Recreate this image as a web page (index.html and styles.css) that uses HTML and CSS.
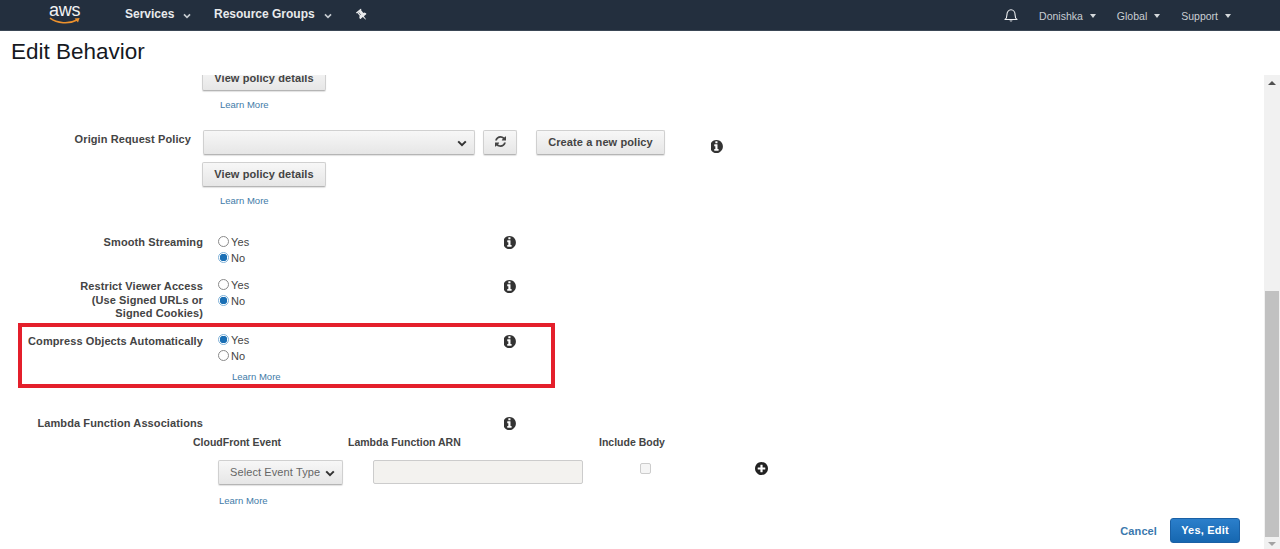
FILE: index.html
```html
<!DOCTYPE html>
<html lang="en">
<head>
<meta charset="utf-8">
<title>Edit Behavior</title>
<link rel="stylesheet" href="styles.css">
</head>
<body>
<svg class="defs" aria-hidden="true">
  <symbol id="i-info" viewBox="128 128 1536 1536"><path d="M1024 1376v-160q0-14-9-23t-23-9h-96v-512q0-14-9-23t-23-9h-320q-14 0-23 9t-9 23v160q0 14 9 23t23 9h96v320h-96q-14 0-23 9t-9 23v160q0 14 9 23t23 9h448q14 0 23-9t9-23zm-128-896v-160q0-14-9-23t-23-9h-192q-14 0-23 9t-9 23v160q0 14 9 23t23 9h192q14 0 23-9t9-23zm640 416q0 209-103 385.5t-279.5 279.5-385.5 103-385.5-103-279.5-279.5-103-385.5 103-385.5 279.5-279.5 385.5-103 385.5 103 279.5 279.5 103 385.5z"/></symbol>
  <symbol id="i-plus" viewBox="128 128 1536 1536"><path d="M1344 960v-128q0-26-19-45t-45-19h-256v-256q0-26-19-45t-45-19h-128q-26 0-45 19t-19 45v256h-256q-26 0-45 19t-19 45v128q0 26 19 45t45 19h256v256q0 26 19 45t45 19h128q26 0 45-19t19-45v-256h256q26 0 45-19t19-45zm320-64q0 209-103 385.5t-279.5 279.5-385.5 103-385.5-103-279.5-279.5-103-385.5 103-385.5 279.5-279.5 385.5-103 385.5 103 279.5 279.5 103 385.5z"/></symbol>
  <symbol id="i-refresh" viewBox="128 128 1536 1536"><path d="M1639 1056q0 5-1 7-64 268-268 434.5t-478 166.5q-146 0-282.5-55t-243.5-157l-129 129q-19 19-45 19t-45-19-19-45v-448q0-26 19-45t45-19h448q26 0 45 19t19 45-19 45l-137 137q71 66 161 102t187 36q134 0 250-65t186-179q11-17 53-117 8-23 30-23h192q13 0 22.5 9.5t9.5 22.5zm25-800v448q0 26-19 45t-45 19h-448q-26 0-45-19t-19-45 19-45l138-138q-148-137-349-137-134 0-250 65t-186 179q-11 17-53 117-8 23-30 23h-199q-13 0-22.5-9.5t-9.5-22.5v-7q65-268 270-434.5t480-166.5q146 0 284 55.5t245 156.5l130-129q19-19 45-19t45 19 19 45z"/></symbol>
  <symbol id="i-chev" viewBox="0 0 10 7"><path d="M1.2 1.4 5 5.2 8.8 1.4" fill="none" stroke="currentColor" stroke-width="2"/></symbol>
</svg>

<header class="topbar">
  <a class="logo">
    <span class="logo-text">aws</span>
    <svg class="logo-smile" viewBox="0 0 32 8"><path d="M1 1.2C8 6.4 20 7.4 28 3" fill="none" stroke="#ec912d" stroke-width="1.6"/><path d="M25.6 1.4 30.6 1 29 5.6Z" fill="#ec912d"/></svg>
  </a>
  <nav class="nav-main">
    <a class="nav-item nav-services">Services <svg class="nav-chev"><use href="#i-chev"/></svg></a>
    <a class="nav-item nav-groups">Resource Groups <svg class="nav-chev"><use href="#i-chev"/></svg></a>
    <svg class="pin" viewBox="0 0 1152 1792"><path d="M480 672v-448q0-14-9-23t-23-9-23 9-9 23v448q0 14 9 23t23 9 23-9 9-23zm672 352q0 26-19 45t-45 19h-429l-51 483q-2 12-10.5 20.5t-20.5 8.5h-1q-27 0-32-27l-76-485h-404q-26 0-45-19t-19-45q0-123 78.5-221.5t177.5-98.5v-512q-52 0-90-38t-38-90 38-90 90-38h640q52 0 90 38t38 90-38 90-90 38v512q99 0 177.5 98.5t78.5 221.5z"/></svg>
  </nav>
  <nav class="nav-user">
    <svg class="bell" viewBox="0 0 14 15"><path d="M1 11.5c1.4-1 1.9-2.4 1.9-4.6C2.900 4 4.600 1.800 7 1.800s4.100 2.200 4.100 5.100c0 2.200.5 3.600 1.900 4.600Z" fill="none" stroke="#eef0f2" stroke-width="1.100" stroke-linejoin="round"/><path d="M5.400 12.400a1.700 1.700 0 0 0 3.200 0Z" fill="#eef0f2"/></svg>
    <a class="user-item user-name">Donishka<i class="caret"></i></a>
    <a class="user-item user-global">Global<i class="caret"></i></a>
    <a class="user-item">Support<i class="caret"></i></a>
  </nav>
</header>

<h1 class="page-title">Edit Behavior</h1>

<main class="pane">
  <div class="content">
    <div class="block block-top">
      <button class="btn btn-details">View policy details</button>
      <a class="learn learn-policy">Learn More</a>
    </div>

    <div class="block block-origin">
      <div class="origin-row">
        <label class="label label-origin">Origin Request Policy</label>
        <div class="select-wrap select-policy">
          <select class="select"><option></option></select>
          <svg class="chev"><use href="#i-chev"/></svg>
        </div>
        <button class="btn btn-refresh"><svg class="refresh"><use href="#i-refresh"/></svg></button>
        <button class="btn btn-create">Create a new policy</button>
        <svg class="info info-origin"><use href="#i-info"/></svg>
      </div>
      <button class="btn btn-details btn-details-2">View policy details</button>
      <a class="learn learn-policy">Learn More</a>
    </div>

    <div class="row row-smooth">
      <div class="label">Smooth Streaming</div>
      <div class="radios">
        <label class="radio"><input type="radio" name="smooth">Yes</label>
        <label class="radio"><input type="radio" name="smooth" checked>No</label>
      </div>
      <svg class="info"><use href="#i-info"/></svg>
    </div>

    <div class="row row-restrict">
      <div class="label">Restrict Viewer Access<br>(Use Signed URLs or<br>Signed Cookies)</div>
      <div class="radios">
        <label class="radio"><input type="radio" name="restrict">Yes</label>
        <label class="radio"><input type="radio" name="restrict" checked>No</label>
      </div>
      <svg class="info"><use href="#i-info"/></svg>
    </div>

    <div class="row row-compress">
      <div class="highlight"></div>
      <div class="label">Compress Objects Automatically</div>
      <div class="radios">
        <label class="radio"><input type="radio" name="compress" checked>Yes</label>
        <label class="radio"><input type="radio" name="compress">No</label>
        <a class="learn learn-compress">Learn More</a>
      </div>
      <svg class="info"><use href="#i-info"/></svg>
    </div>

    <div class="row row-lambda">
      <div class="label">Lambda Function Associations</div>
      <div class="radios"></div>
      <svg class="info"><use href="#i-info"/></svg>
    </div>

    <div class="lambda-head">
      <span class="col-event">CloudFront Event</span>
      <span class="col-arn">Lambda Function ARN</span>
      <span class="col-body">Include Body</span>
    </div>

    <div class="lambda-row">
      <div class="select-wrap select-event">
        <select class="select"><option>Select Event Type</option></select>
        <svg class="chev"><use href="#i-chev"/></svg>
      </div>
      <input class="arn" type="text" disabled>
      <input class="check" type="checkbox" disabled>
      <svg class="plus"><use href="#i-plus"/></svg>
    </div>

    <a class="learn learn-lambda">Learn More</a>

    <div class="actions">
      <a class="cancel">Cancel</a>
      <button class="btn-primary">Yes, Edit</button>
    </div>
  </div>

  <div class="scrollbar">
    <i class="arrow-up"></i>
    <div class="track"><div class="thumb"></div></div>
    <i class="arrow-down"></i>
  </div>
</main>
</body>
</html>
```
FILE: styles.css
```css
* { box-sizing: border-box; }
html, body { margin: 0; padding: 0; height: 549px; overflow: hidden; background: #fff; }
body { font-family: "Liberation Sans", Arial, sans-serif; color: #444; }
.defs { position: absolute; width: 0; height: 0; }

/* top bar */
.topbar { height: 31px; background: #232f3e; border-bottom: 1px solid #3a4655; display: flex; align-items: center; color: #e8eaec; }
.logo { width: 125px; padding-left: 49px; display: block; position: relative; height: 30px; }
.logo-text { display: block; font-family: "Liberation Sans", sans-serif; font-size: 18px; line-height: normal; color: #f2f3f4; letter-spacing: -.2px; }
.logo-smile { position: absolute; left: 49px; top: 17px; width: 32px; height: 8px; }
.nav-main { display: flex; align-items: center; flex: 1; margin-top: -2px; }
.nav-item { font-size: 12px; font-weight: 700; display: flex; align-items: center; }
.nav-services { width: 89px; }
.nav-groups { width: 142px; }
.nav-chev { width: 8px; height: 6px; margin-left: 9px; margin-top: 3px; color: #c6cbd0; }
.pin { width: 9px; height: 13px; fill: #e8eaec; transform: rotate(-40deg); margin-left: 2px; margin-top: 2px; }
.nav-user { display: flex; align-items: center; font-size: 10.500px; padding-right: 49px; color: #c9ced3; }
.bell { width: 14px; height: 15px; margin-right: 21px; }
.user-item { display: flex; align-items: center; margin-top: 1px; }
.user-name { margin-right: 21px; }
.user-global { margin-right: 21px; }
.caret { width: 0; height: 0; margin-left: 7px; border: 3px solid transparent; border-top: 4px solid #d5d9dc; border-bottom: 0; }

.page-title { margin: 0; height: 44px; padding: 8px 0 0 11px; font-size: 22.500px; line-height: 25px; font-weight: 400; color: #16191f; }

/* pane */
.pane { height: 474px; display: flex; overflow: hidden; }
.content { flex: 1; min-width: 0; font-size: 11px; }

.btn { font-family: inherit; font-size: 11px; font-weight: 700; letter-spacing: .1px; color: #444; height: 25px; padding: 0 0 1px; border: 1px solid #d0d0d0; border-bottom-color: #b5b5b5; border-radius: 2px; background: linear-gradient(#f7f7f7, #e6e6e6); box-shadow: 0 1px 1px rgba(0,0,0,.12); }
.btn-details { display: block; width: 124px; margin-left: 202px; }
.learn { display: block; font-size: 9.500px; line-height: 12px; color: #3f7ba8; }
.learn-policy { margin: 8px 0 0 220px; }

.block-top { margin-top: -9px; }
.block-origin { margin-top: 19px; }
.origin-row { display: flex; align-items: flex-start; height: 32px; }
.label { width: 203px; flex: none; text-align: right; font-weight: 700; font-size: 11px; line-height: 13.500px; letter-spacing: .1px; color: #444; }
.label-origin { width: 191px; margin-top: 3px; white-space: nowrap; }
.select-wrap { position: relative; flex: none; }
.select-policy { width: 272px; height: 25px; margin-left: 12px; }
.select { appearance: none; -webkit-appearance: none; display: block; width: 100%; height: 100%; font-family: inherit; font-size: 12px; color: #666; padding: 0 0 2px 11px; border: 1px solid #d0d0d0; border-bottom-color: #b5b5b5; border-radius: 2px; background: linear-gradient(#f7f7f7, #e6e6e6); box-shadow: 0 1px 1px rgba(0,0,0,.12); }
.chev { position: absolute; right: 8px; top: 10px; width: 10px; height: 7px; color: #333; pointer-events: none; }
.btn-refresh { flex: none; width: 34px; margin-left: 8px; display: flex; align-items: center; justify-content: center; }
.refresh { width: 11px; height: 11px; fill: #444; margin-top: -2px; }
.btn-create { flex: none; width: 129px; margin-left: 19px; }
.info { width: 13px; height: 13px; fill: #333; flex: none; }
.info-origin { margin: 10px 0 0 46px; }
.btn-details-2 { margin-left: 202px; }

.row { display: flex; align-items: flex-start; position: relative; }
.radios { width: 301px; flex: none; padding-left: 15px; }
.radio { display: flex; align-items: center; height: 16px; font-size: 11px; letter-spacing: .1px; color: #444; }
.radio input { appearance: none; -webkit-appearance: none; width: 11px; height: 11px; margin: -2px 2px 0 0; border: 1px solid #8a8a8a; border-radius: 50%; background: #fff; flex: none; }
.radio input:checked { border-color: #7fb2d9; background: radial-gradient(circle, #1a6fb5 0 3.500px, #fff 4px); }

.row-smooth { margin-top: 27px; height: 43px; }
.row-restrict { height: 55px; }
.row-compress { height: 82px; }
.row-lambda { height: 22px; }
.row-smooth .label, .row-smooth .info { margin-top: 2px; }
.row-restrict .label, .row-restrict .info,
.row-compress .label, .row-compress .info,
.row-lambda .label, .row-lambda .info { margin-top: 3px; }
.learn-compress { margin: 7px 0 0 14px; }

.highlight { position: absolute; left: 18px; top: -9px; width: 537px; height: 65px; border: 4px solid #e41f2b; pointer-events: none; }

.lambda-head { display: flex; height: 24px; font-weight: 700; font-size: 10.500px; line-height: 13px; color: #444; }
.col-event { margin-left: 193px; width: 155px; }
.col-arn { width: 251px; }

.lambda-row { display: flex; align-items: flex-start; height: 35px; padding-left: 218px; }
.select-event { width: 125px; height: 25px; }
.select-event .select { font-size: 11px; letter-spacing: .1px; padding-left: 11px; }
.arn { width: 210px; height: 24px; margin: 0 0 0 30px; border: 1px solid #ccc; border-radius: 2px; background: #f3f2ef; }
.check { appearance: none; -webkit-appearance: none; width: 11px; height: 11px; margin: 3px 0 0 57px; border: 1px solid #ccc; border-radius: 2px; background: #f5f5f5; }
.plus { width: 13px; height: 13px; fill: #222; margin: 2px 0 0 104px; }
.learn-lambda { margin: 0 0 0 219px; }

.actions { display: flex; justify-content: flex-end; align-items: center; padding-right: 24px; gap: 13px; margin-top: 11px; }
.cancel { font-size: 11px; font-weight: 700; color: #3a78ad; margin-top: 1px; letter-spacing: .1px; }
.btn-primary { width: 70px; height: 25px; padding: 0 0 1px; border: 1px solid #1a60a5; border-radius: 3px; background: linear-gradient(#2b7fcb, #1667b0); color: #fff; font-family: inherit; font-size: 11px; font-weight: 700; letter-spacing: .2px; }

/* scrollbar */
.scrollbar { width: 16px; flex: none; background: #f1f1f1; display: flex; flex-direction: column; align-items: center; padding: 0 1px; }
.track { flex: 1; width: 100%; display: flex; flex-direction: column; justify-content: flex-end; }
.thumb { height: 246px; background: #c1c1c1; }
.arrow-up, .arrow-down { width: 0; height: 0; flex: none; border: 4px solid transparent; }
.arrow-up { border-bottom: 4px solid #505050; border-top: 0; margin: 6px 0 6px; }
.arrow-down { border-top: 4px solid #a3a3a3; border-bottom: 0; margin: 5px 0 3px; }
```
